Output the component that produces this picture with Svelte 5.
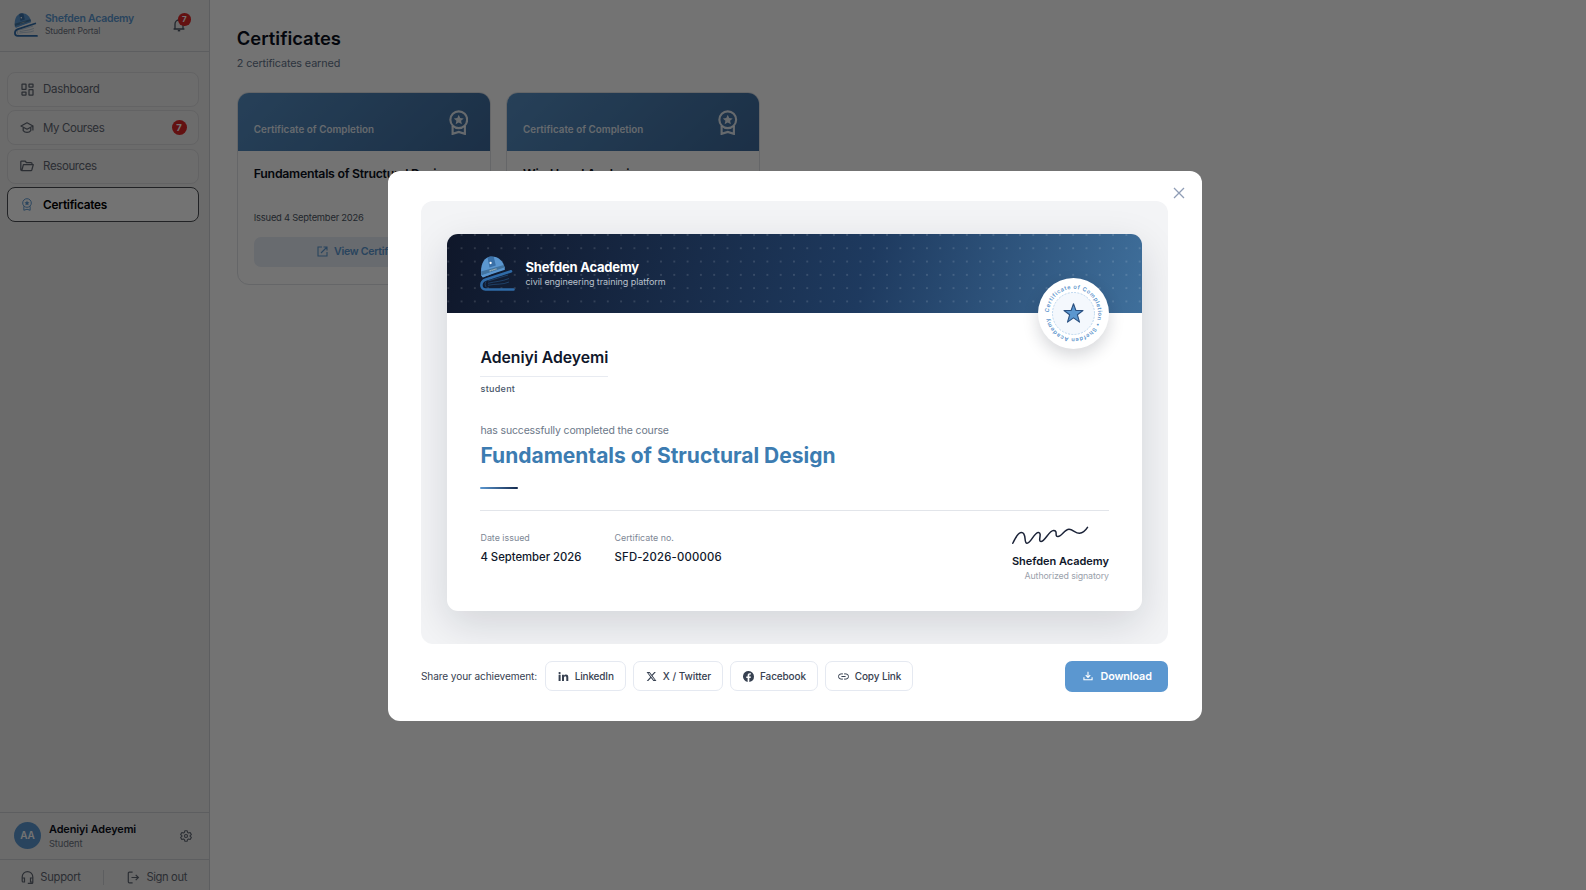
<script>
  const nav = [
    { id: 'dash', label: 'Dashboard', ls: -0.32 },
    { id: 'courses', label: 'My Courses', ls: -0.42 },
    { id: 'folder', label: 'Resources', ls: -0.4 },
    { id: 'award', label: 'Certificates', ls: -0.24, active: true }
  ];
  nav[1].badge = 7;
  const certificates = [
    { title: 'Fundamentals of Structural Design', issued: '4 September 2026' },
    { title: 'Wind Load Analysis', issued: '4 September 2026' }
  ];
</script>

{#snippet logo(size)}
  <svg width={size} height={size} viewBox="0 0 35 35" fill="none">
    <path d="M1.200 19.500C-.1 9 4 1.200 10.500.6 18 0 23 4.500 25 12.300L3 21.600Z" fill="#5b97d0" />
    <path d="M7.500 1.600 10.200.400 13.800.900 15.800 9.500 9.500 11.500Z" fill="#2f6399" opacity=".75" />
    <path d="M1 15.600 23.700 9.100 24.700 12.200 1.600 19.400Z" fill="#41739f" />
    <path d="M2 20.200 24.600 12.600" stroke="#5b97d0" stroke-width="2.200" />
    <path d="M9.500 15 16.500 12.900" stroke="#a9b6b5" stroke-width="1.200" stroke-dasharray="1.500 .5" />
    <circle cx="10.600" cy="7" r="1.150" fill="#fff" />
    <path d="M31 15.300 5.800 23.400C-.3 25.500.2 33.500 5.500 33.500H33.500" stroke="#2f6ba8" stroke-width="2.600" stroke-linecap="round" />
    <path d="M6 25.500C4.500 28 5 30 6.500 31.300M8 25 28 19M8 27.300C15 25.500 22 25.500 29 22.500M8 29.300C16 27.500 23 29 29 26" stroke="#2f6ba8" stroke-width=".6" opacity=".75" />
  </svg>
{/snippet}

{#snippet award(size, sw)}
  <svg width={size} height={size * 1.3} viewBox="0 0 20 26" fill="none" stroke="currentColor" stroke-width={sw}>
    <circle cx="10" cy="10" r="8.600" />
    <path d="M3.700 16.500V24.500L10 22.500 16.300 24.500V16.500" />
    <path d="m10 5 1.500 3.300 3.600.4-2.700 2.400.8 3.500L10 12.800l-3.200 1.800.8-3.500L4.900 8.700l3.600-.4z" fill="currentColor" stroke="none" />
  </svg>
{/snippet}

<div class="app">
  <aside>
    <header class="brand">
      {@render logo(24)}
      <div class="brand-text">
        <strong>Shefden Academy</strong>
        <span>Student Portal</span>
      </div>
      <div class="bell">
        <svg width="12" height="14" viewBox="0 0 12 14" fill="none" stroke="currentColor" stroke-width="1.300">
          <path d="M.6 11h10.800M2 11V6a4 4 0 0 1 8 0v5M6 2V.6" />
          <path d="M4.800 12.600h2.400" stroke-width="1.600" />
        </svg>
        <b>7</b>
      </div>
    </header>

    <nav>
      {#each nav as item}
        <a class:active={item.active} style:letter-spacing="{item.ls}px">
          <span class="ico">
            {#if item.id === 'dash'}
              <svg width="13" height="13" viewBox="0 0 13 13" fill="none" stroke="currentColor" stroke-width="1.250">
                <rect x="1" y="1" width="4" height="5.400" rx=".3" /><rect x="8" y="1" width="4" height="3" rx=".3" />
                <rect x="1" y="9" width="4" height="3" rx=".3" /><rect x="8" y="6.600" width="4" height="5.400" rx=".3" />
              </svg>
            {:else if item.id === 'courses'}
              <svg width="14" height="13" viewBox="0 0 14 13" fill="none" stroke="currentColor" stroke-width="1.250" stroke-linejoin="round">
                <path d="M1 5 7 1.800 13 5 7 8.200ZM3.200 6.300V9.600C5 12 9 12 10.800 9.600V6.300M12.900 5V9.500" />
              </svg>
            {:else if item.id === 'folder'}
              <svg width="14" height="12" viewBox="0 0 14 12" fill="none" stroke="currentColor" stroke-width="1.250" stroke-linejoin="round">
                <path d="M1.800 10.500A1 1 0 0 1 .8 9.500V2a1 1 0 0 1 1-1H5L6.400 2.500H11a1 1 0 0 1 1 1V4.600M1.800 10.500 3.400 4.700H13.300L11.800 10a.8.8 0 0 1-.8.500Z" />
              </svg>
            {:else}
              {@render award(10, 1.9)}
            {/if}
          </span>
          <span class="label">{item.label}</span>
          {#if item.badge}<b>{item.badge}</b>{/if}
        </a>
      {/each}
    </nav>

    <div class="user">
      <div class="avatar">AA</div>
      <div class="who">
        <strong>Adeniyi Adeyemi</strong>
        <span>Student</span>
      </div>
      <svg width="12" height="12" viewBox="0 0 24 24" fill="none" stroke="currentColor" stroke-width="2.200" stroke-linejoin="round">
        <path d="M9.600 1.500h4.800l.7 3.300 2 1.200 3.200-1.100 2.400 4.200-2.500 2.200v1.400l2.500 2.200-2.400 4.200-3.200-1.100-2 1.200-.7 3.300H9.600l-.7-3.300-2-1.200-3.200 1.100-2.400-4.200 2.500-2.200v-1.400L1.300 9.100l2.400-4.200L6.900 6l2-1.200z" />
        <circle cx="12" cy="12" r="3" />
      </svg>
    </div>
    <footer>
      <a class="support">
        <svg width="13" height="13" viewBox="0 0 13 13" fill="none" stroke="currentColor" stroke-width="1.200">
          <path d="M1.200 8V5.900a5.200 5.200 0 0 1 10.600 0V11.400a.9.9 0 0 1-.9.900H6.800M1.200 7h2.300v4H2.100a.9.9 0 0 1-.9-.9ZM11.800 7H9.500v4h2.300" />
        </svg>
        Support
      </a>
      <i></i>
      <a class="signout">
        <svg width="13" height="13" viewBox="0 0 13 13" fill="none" stroke="currentColor" stroke-width="1.200">
          <path d="M5.600 1.200H2.300a1 1 0 0 0-1 1v8.600a1 1 0 0 0 1 1H5.600M4.500 6.500H11.300M8.700 3.800 11.400 6.500 8.700 9.200" />
        </svg>
        Sign out
      </a>
    </footer>
  </aside>

  <main>
    <h1>Certificates</h1>
    <p class="count">2 certificates earned</p>
    <div class="grid">
      {#each certificates as c}
        <article>
          <div class="cap">
            <span>Certificate of Completion</span>
            {@render award(19.5, 2.2)}
          </div>
          <div class="content">
            <h2>{c.title}</h2>
            <p>Issued {c.issued}</p>
            <button>
              <svg width="11" height="11" viewBox="0 0 11 11" fill="none" stroke="currentColor" stroke-width="1.100">
                <path d="M5 1H1v9h9V6M6.500 1H10v3.500M10 1 4 7" />
              </svg>
              View Certificate
            </button>
          </div>
        </article>
      {/each}
    </div>
  </main>
</div>

<div class="overlay">
  <section class="modal">
    <svg class="close" width="12" height="12" viewBox="0 0 12 12" stroke="#8f9db5" stroke-width="1.300">
      <path d="m1 1 10 10M11 1 1 11" />
    </svg>

    <div class="stage">
      <div class="cert">
        <div class="cert-head">
          {@render logo(35)}
          <div>
            <strong>Shefden Academy</strong>
            <span>civil engineering training platform</span>
          </div>
        </div>
        <div class="seal">
          <svg width="71" height="71" viewBox="-35.500 -35.500 71 71">
            <defs>
              <path id="ring" d="M-24.600 -1.200A24.600 24.600 0 0 1 24.600 1.200A24.600 24.600 0 0 1 -24.600 -1.200" />
            </defs>
            <circle r="21" fill="#f4f8fd" stroke="#b5d2ec" stroke-width=".9" stroke-dasharray="2 1.300" />
            <text textLength="148"><textPath href="#ring" textLength="148">Certificate of Completion • Shefden Academy</textPath></text>
            <path d="M0-9.800 2.400-3 9.500-3 3.900 1.300 6 8.600 0 4.400-6 8.600-3.900 1.300-9.500-3-2.400-3Z" fill="#5b97d0" stroke="#2a5080" stroke-width="1.100" stroke-linejoin="round" />
          </svg>
        </div>

        <div class="cert-body">
          <div class="name">Adeniyi Adeyemi</div>
          <div class="role">student</div>
          <div class="has">has successfully completed the course</div>
          <div class="course">Fundamentals of Structural Design</div>
          <div class="bar"></div>
          <div class="foot">
            <dl>
              <dt>Date issued</dt>
              <dd>4 September 2026</dd>
            </dl>
            <dl class="no">
              <dt>Certificate no.</dt>
              <dd>SFD-2026-000006</dd>
            </dl>
            <div class="sign">
              <svg width="78" height="22" viewBox="0 0 78 22" fill="none" stroke="#1b2338" stroke-width="1.500" stroke-linecap="round" stroke-linejoin="round">
                <path d="M.8 19.300C3 14.500 6 8.500 9.500 8.500 15 8.500 11.500 19.500 15 19.300 19 19 22.500 8 26.500 8.500 30.500 9 25.500 17.500 29 17.500 33 17.500 37 6.500 41.500 6.500 46.500 6.500 42 12.600 46 12.500 50 12.400 52.500 5.300 57 5.300 61 5.300 63.500 9.500 67.500 9.300 71 9.100 73.500 6.500 75.500 3.400" />
              </svg>
              <strong>Shefden Academy</strong>
              <span>Authorized signatory</span>
            </div>
          </div>
        </div>
      </div>
    </div>

    <div class="share">
      <span class="prompt">Share your achievement:</span>
      <button style:width="81.5px" style:letter-spacing="-.16px">
        <svg width="11" height="11" viewBox="0 0 11 11" fill="currentColor"><path d="M.6 3.800h2V10h-2zM1.600.900a1.150 1.150 0 1 1 0 2.300 1.150 1.150 0 0 1 0-2.300M4 3.800h1.900v.9c.4-.7 1.100-1.100 2-1.100 1.900 0 2.400 1.200 2.400 3V10h-2V7c0-.9-.1-1.700-1-1.700-1 0-1.300.7-1.300 1.700v3H4z" /></svg>
        LinkedIn
      </button>
      <button style:width="90px" style:letter-spacing="-.06px">
        <svg width="11" height="11" viewBox="0 0 24 24" fill="currentColor"><path d="M18.200 2.200h3.300l-7.200 8.300L22.800 21.800h-6.700l-5.200-6.800-6 6.800H1.600l7.700-8.800L1.200 2.200H8l4.700 6.200zM17.100 19.800h1.800L7.100 4.100H5.100z" /></svg>
        X / Twitter
      </button>
      <button style:width="88px" style:letter-spacing="-.12px">
        <svg width="11" height="11" viewBox="0 0 24 24" fill="currentColor"><path d="M24 12a12 12 0 1 0-13.900 11.900v-8.400h-3V12h3V9.400c0-3 1.800-4.700 4.500-4.700 1.300 0 2.700.2 2.700.2v3h-1.500c-1.500 0-2 .9-2 1.900V12h3.400l-.5 3.500h-2.900v8.400A12 12 0 0 0 24 12" /></svg>
        Facebook
      </button>
      <button style:width="88px" style:letter-spacing="-.12px">
        <svg width="11" height="11" viewBox="0 0 11 11" fill="none" stroke="currentColor" stroke-width="1"><path d="M4.900 2.900H3.100a2.600 2.600 0 0 0 0 5.200h1.800M6.100 2.900h1.800a2.600 2.600 0 0 1 0 5.200H6.100M3.400 5.500h4.200" /></svg>
        Copy Link
      </button>
      <button class="download">
        <svg width="10" height="10" viewBox="0 0 11 11" fill="none" stroke="currentColor" stroke-width="1.200"><path d="M1 7v2.700h9V7M5.500.8v6M3 4.500l2.500 2.500L8 4.500" /></svg>
        Download
      </button>
    </div>
  </section>
</div>

<style>
  :global(body) { margin: 0; overflow: hidden; background: #fff; font-family: Inter, sans-serif; }
  * { box-sizing: border-box; }
  svg { display: block; flex: none; }
  h1, h2, p, dl, dd { margin: 0; }
  button { font-family: inherit; white-space: nowrap; }

  .app { display: flex; width: 1586px; height: 890px; overflow: hidden; }
  aside { width: 210px; height: 100%; flex: none; display: flex; flex-direction: column; background: #ededed; border-right: 1px solid #cfd1d4; }

  .brand { height: 52px; display: flex; align-items: flex-start; padding: 13px 18px 0 14px; border-bottom: 1px solid #cfd1d4; }
  .brand-text { display: flex; flex-direction: column; margin-left: 7px; }
  .brand-text strong { font-size: 10.500px; font-weight: 600; letter-spacing: -.27px; line-height: 12px; color: #5b97d0; margin-top: -.500px; }
  .brand-text span { font-size: 8.600px; letter-spacing: -.19px; line-height: 12px; color: #6b7280; margin-top: .5px; }
  .bell { position: relative; margin: 5px 6px 0 auto; color: #4b5563; }
  .bell b { position: absolute; left: 5px; top: -5px; width: 12.500px; height: 12.500px; font-size: 8px; line-height: 12.500px; }
  b { display: block; border-radius: 50%; background: #dc2626; color: #fff; font-weight: 700; text-align: center; letter-spacing: 0; }

  nav { display: flex; flex-direction: column; gap: 3.600px; padding: 19.700px 10px 0 7.300px; }
  nav a { height: 34.900px; display: flex; align-items: center; border: 1px solid #dcdcde; border-radius: 8px; background: #efefef; color: #5f6672; font-size: 11.500px; padding: 0 11.500px 0 12px; }
  nav a.active { background: #fff; border-color: #4a4d52; color: #000; font-size: 11.800px; font-weight: 600; }
  nav b { width: 15px; height: 15px; line-height: 15px; font-size: 9.500px; margin-left: auto; }
  .ico { width: 14px; display: flex; justify-content: center; margin-right: 8.800px; }
  .active .ico { color: #5b97d0; }

  .user { margin-top: auto; height: 47.300px; display: flex; align-items: center; padding: 0 17.500px 0 14px; border-top: 1px solid #cfd1d4; color: #5f6672; }
  .user > svg { margin-left: auto; }
  .avatar { width: 27px; height: 27px; border-radius: 50%; background: #5b97d0; color: #fff; font-size: 10px; font-weight: 600; line-height: 27px; text-align: center; letter-spacing: -.2px; }
  .who { display: flex; flex-direction: column; margin-left: 8px; }
  .who strong { font-size: 10.900px; font-weight: 600; letter-spacing: -.1px; line-height: 14px; color: #0b0f19; }
  .who span { font-size: 9.300px; letter-spacing: -.11px; line-height: 12px; color: #6b7280; margin-top: 2px; }
  footer { height: 31px; display: flex; align-items: center; border-top: 1px solid #cfd1d4; padding: 4px 22px 0 20.500px; font-size: 11.200px; color: #5f6672; }
  footer a { display: flex; align-items: center; gap: 6.800px; }
  footer i { width: 1px; height: 15px; background: #cfd1d4; margin-left: auto; }
  .support { letter-spacing: -.26px; }
  .signout { letter-spacing: -.36px; margin-left: 23px; }

  main { flex: 1; padding: 26px 0 0 26.800px; }
  h1 { font-size: 18.400px; line-height: 24px; font-weight: 600; color: #0b1020; }
  .count { font-size: 10.800px; line-height: 14px; letter-spacing: -.12px; color: #64748b; margin-top: 6.500px; }
  .grid { display: flex; gap: 15.300px; margin-top: 21px; }
  article { width: 254px; height: 193px; border: 1px solid #dfe2e7; border-radius: 12px; overflow: hidden; }
  .cap { height: 58px; display: flex; justify-content: space-between; padding: 17.300px 21.500px 0 16px; color: rgba(255, 255, 255, .85); background: linear-gradient(135deg, #568fc4, #3d6a9c); }
  .cap span { font-size: 9.800px; font-weight: 600; letter-spacing: .04px; line-height: 14px; margin-top: 13.500px; }
  .content { padding: 14px 16px 0; }
  h2 { height: 46.200px; font-size: 12.300px; font-weight: 600; letter-spacing: -.26px; line-height: 17px; color: #0b1020; white-space: nowrap; }
  .content p { font-size: 9.400px; letter-spacing: -.22px; line-height: 14px; color: #4b5563; }
  .content button { width: 100%; height: 30px; margin-top: 12.300px; padding: 0 0 0 1px; display: flex; align-items: center; justify-content: center; gap: 6px; border: 0; border-radius: 7px; background: #e6edf6; color: #5b97d0; font-size: 10.600px; font-weight: 600; letter-spacing: -.3px; }

  .overlay { position: fixed; inset: 0; display: flex; align-items: center; justify-content: center; padding: 2px 0 0 3.400px; background: rgba(0, 0, 0, .55); }
  .modal { position: relative; width: 814px; height: 550.600px; padding: 29.800px 33.300px 0; border-radius: 12px; background: #fff; }
  .close { position: absolute; top: 16.500px; right: 16.500px; }
  .stage { height: 443.500px; padding: 33px 26.500px; border-radius: 12px; background: #f3f4f6; overflow: hidden; }
  .cert { position: relative; height: 377px; border-radius: 11px; background: #fff; box-shadow: 0 13px 40px rgba(15, 23, 42, .14); }
  .cert-head { height: 79.700px; display: flex; align-items: center; padding: 0 33px; border-radius: 11px 11px 0 0;
    background: radial-gradient(circle at 1px 1px, rgba(255, 255, 255, .13) .9px, transparent 1.200px) .3px 0 / 13.300px 13.300px, linear-gradient(105deg, #0f172a 0%, #1e3a5f 60%, #3f6f9b 100%); }
  .cert-head div { display: flex; flex-direction: column; margin-left: 10px; }
  .cert-head strong { font-size: 13px; font-weight: 700; letter-spacing: -.2px; line-height: 16.500px; color: #fff; }
  .cert-head span { font-size: 9px; letter-spacing: -.06px; line-height: 12px; color: #b9c0cc; }
  .seal { position: absolute; top: 44.300px; right: 33.300px; width: 71px; height: 71px; border-radius: 50%; background: #fff; box-shadow: 0 7px 16px rgba(15, 23, 42, .17); }
  .seal text { font-size: 5.600px; font-weight: 600; fill: #5b93cb; }

  .cert-body { display: flex; flex-direction: column; align-items: flex-start; padding: 34px 33px 0; white-space: nowrap; }
  .name { font-size: 15.800px; font-weight: 600; letter-spacing: -.05px; line-height: 22px; padding-bottom: 7.300px; border-bottom: 1px solid #e8ebf1; color: #0f172a; }
  .role { font-size: 9px; font-weight: 500; letter-spacing: .3px; line-height: 12px; margin-top: 5.200px; color: #475569; }
  .has { font-size: 10.500px; letter-spacing: -.15px; line-height: 14px; margin-top: 29px; color: #6b7788; }
  .course { font-size: 21px; font-weight: 700; letter-spacing: -.01px; line-height: 28px; margin-top: 4.500px; color: #3c7cb1; }
  .bar { width: 38px; height: 2.500px; border-radius: 2px; margin-top: 16.500px; background: linear-gradient(90deg, #5b97d0, #14294d); }
  .foot { align-self: stretch; display: flex; align-items: flex-start; margin-top: 20.700px; border-top: 1px solid #e2e5ea; }
  dl { width: 134px; margin-top: 21px; }
  dt { font-size: 8.900px; letter-spacing: 0; line-height: 12px; color: #7d8795; }
  dd { font-size: 11.300px; font-weight: 500; letter-spacing: -.02px; line-height: 16px; margin-top: 5px; color: #0f172a; }
  .no dd { letter-spacing: .22px; }
  .sign { display: flex; flex-direction: column; align-items: flex-end; margin: 13px 0 0 auto; }
  .sign svg { align-self: flex-start; margin-left: -.300px; }
  .sign strong { font-size: 11px; font-weight: 600; letter-spacing: -.04px; line-height: 14px; margin-top: 8px; color: #0f172a; }
  .sign span { font-size: 8.800px; letter-spacing: -.12px; line-height: 12px; margin-top: 2px; color: #9aa1ab; }

  .share { display: flex; align-items: center; gap: 7px; height: 31px; margin-top: 16.500px; }
  .prompt { width: 117px; font-size: 10.100px; letter-spacing: -.1px; color: #374151; white-space: nowrap; }
  .share button { height: 30px; padding: 0; display: flex; align-items: center; justify-content: center; gap: 6px; border: 1px solid #e5e9f1; border-radius: 7px; background: #fff; color: #374151; font-size: 10px; font-weight: 500; }
  .share .download { width: 103px; height: 31px; margin-left: auto; padding: 0 0 0 1px; gap: 7.500px; border: 0; background: #5b97d0; color: #fff; font-size: 10.800px; font-weight: 600; letter-spacing: -.12px; }
</style>
